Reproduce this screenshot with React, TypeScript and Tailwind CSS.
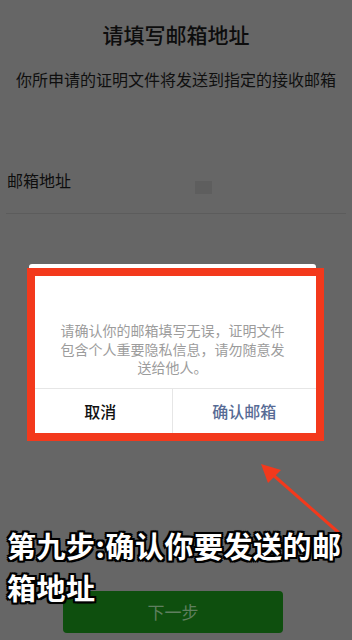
export default function App() {
  const cjk = "font-['Noto_Sans_CJK_SC','Noto_Sans',sans-serif]";

  return (
    <div className={`relative w-[352px] h-[640px] overflow-hidden bg-[#666666] ${cjk}`}>
      {/* page behind the mask */}
      <div className="flex h-full flex-col">
        <h1 className="pt-[20px] text-center text-[21px] leading-[28px] font-medium text-[#0d0d0d]">
          请填写邮箱地址
        </h1>
        <p className="mt-[20px] text-center text-[16px] leading-[22px] text-[#0f0f0f]">
          你所申请的证明文件将发送到指定的接收邮箱
        </p>
        <div className="mx-[6px] mt-[79px] flex items-start border-b border-[#5c5c5c] pb-[19px]">
          <span className="pl-[1px] text-[16px] leading-[22px] text-[#0d0d0d]">邮箱地址</span>
          <span className="ml-[124px] mt-[12px] h-[13px] w-[17px] bg-[#5e5e5e]" />
        </div>
        <div className="mt-auto mb-[7px] ml-[63px] flex h-[42px] w-[220px] items-center justify-center rounded-[4px] bg-[#0e4f0e] text-[17px] text-[#5f7f5f]">
          下一步
        </div>
      </div>

      {/* confirm dialog */}
      <div className="absolute left-[29px] top-[264px] w-[287px] overflow-hidden rounded-[3px] bg-white">
        <p className="px-[28px] pt-[57px] pb-[11px] text-center text-[14px] leading-[18.5px] text-[#9c9c9c]">
          请确认你的邮箱填写无误，证明文件包含个人重要隐私信息，请勿随意发送给他人。
        </p>
        <div className="grid h-[47px] grid-cols-2 border-t border-[#e6e6e6] text-[16px]">
          <button className="border-r border-[#e6e6e6] pb-[2px] font-medium text-[#111111]">取消</button>
          <button className="pb-[2px] font-medium text-[#576b95]">确认邮箱</button>
        </div>
      </div>

      {/* red highlight box */}
      <div className="absolute left-[27px] top-[268px] h-[173px] w-[297px] border-[8px] border-[#f3391c]" />

      {/* arrow */}
      <svg className="pointer-events-none absolute inset-0" width="352" height="640" viewBox="0 0 352 640">
        <line x1="338" y1="532" x2="272" y2="474" stroke="#f3391c" strokeWidth="3" strokeLinecap="round" />
        <polygon points="261,464 281,470 268,483" fill="#f3391c" />
      </svg>

      {/* caption */}
      <div className="absolute left-[7px] top-[524px] whitespace-nowrap text-[29px] leading-[42px] tracking-[0.5px] font-bold text-white [text-shadow:-2px_-2px_0_#000,2px_-2px_0_#000,-2px_2px_0_#000,2px_2px_0_#000,0_2px_0_#000,0_-2px_0_#000,2px_0_0_#000,-2px_0_0_#000,0_0_3px_#000]">
        第九步:确认你要发送的邮
        <br />
        箱地址
      </div>
    </div>
  );
}
